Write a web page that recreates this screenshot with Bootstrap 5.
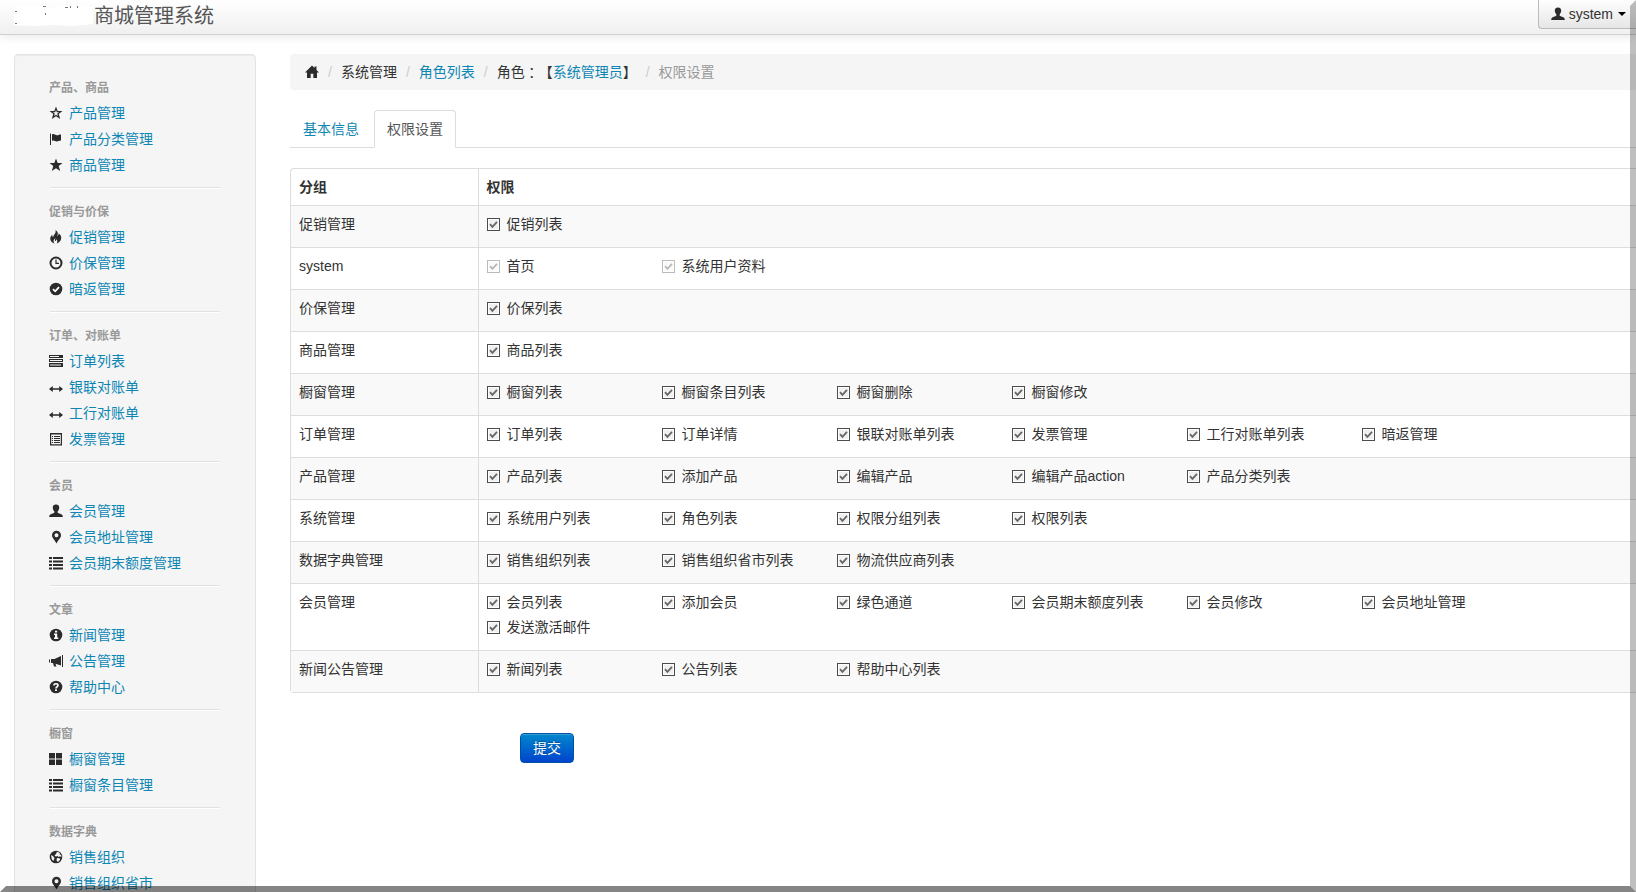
<!DOCTYPE html>
<html lang="zh-CN">
<head>
<meta charset="utf-8">
<meta name="viewport" content="width=device-width, initial-scale=1">
<title>商城管理系统</title>
<link href="https://cdn.jsdelivr.net/npm/bootstrap@5.3.0/dist/css/bootstrap.min.css" rel="stylesheet">
<style>
body{font:14px/20px "Liberation Sans","Noto Sans CJK SC",sans-serif;color:#333;background:#fff}
a{color:#0d86b4;text-decoration:none}
a:hover{color:#005580;text-decoration:underline}
.ico{width:14px;height:14px;fill:#2b2b2b;flex:none}
.topbar{height:35px;background:linear-gradient(#fff,#f0f0f0);border-bottom:1px solid #d0d0d0;box-shadow:0 1px 10px rgba(0,0,0,.1);position:relative}
.brand{padding-left:14px;font-size:20px;line-height:32px;color:#777}
.brand:hover{color:#555;text-decoration:none}
.logo{width:80px;height:22px}
.user-btn{height:30px;margin-top:-1px;padding:0 10px 0 12px;border:1px solid #bbb;border-top:0;border-right:0;border-radius:0 0 0 4px;background:linear-gradient(#fff,#e6e6e6);color:#333;font-size:14px;line-height:20px;gap:4px}
.user-btn::after{margin-left:1px;color:#000;border-top-width:4px;border-left-width:4px;border-right-width:4px}
.page{padding:19px 0 0 14px;gap:34px}
.side{width:242px;padding:19px 34px;background:#f5f5f5;border:1px solid #e3e3e3;border-radius:4px;box-shadow:inset 0 1px 1px rgba(0,0,0,.05);flex:none}
.side h2{font-size:12px;line-height:20px;padding:4px 0 2px;margin:0;font-weight:700;color:#999}
.side li{display:flex;align-items:center;gap:6px;height:26px}
.side hr{margin:9px 1px;border:0;height:2px;opacity:1;background:linear-gradient(#e1e1e1 50%,#fff 50%)}
.crumbs{padding:8px 15px;background:#f5f5f5;border-radius:4px 0 0 4px;margin-bottom:20px}
.crumbs .breadcrumb-item{display:flex;align-items:center;padding-left:0}
.crumbs .breadcrumb-item+.breadcrumb-item::before{padding:0 9px;color:#ccc;content:"/";float:none}
.crumbs .active{color:#999}
.wide-colon{font-family:"Noto Sans CJK TC",sans-serif}
.nav-tabs{--bs-nav-tabs-border-color:#ddd;margin-bottom:20px;gap:2px}
.nav-tabs .nav-link{padding:8px 12px;color:#0d86b4;border-radius:4px 4px 0 0}
.nav-tabs .nav-link.active{color:#555;border-color:#ddd #ddd #fff}
.grid-table{border:1px solid #ddd;border-right:0;border-radius:4px 0 0 4px;margin-bottom:40px}
.grid-table table{margin:0;color:#333;--bs-table-striped-bg:#f9f9f9;--bs-table-striped-color:#333}
.grid-table th,.grid-table td{padding:8px;border:0;vertical-align:top}
.grid-table tbody tr{border-top:1px solid #ddd}
.grid-table th:first-child,.grid-table td:first-child{width:187px;border-right:1px solid #ddd}
.perm{display:flex;align-items:center;gap:7px;width:175px;height:20px;margin-bottom:5px}
.perm input{appearance:none;width:13px;height:13px;margin:0;border:1px solid #4c4c4c;background:#f2f2f2;box-shadow:inset 0 0 0 1px #fff}
.perm input:checked{background:#f0f0f0 url("data:image/svg+xml,%3Csvg xmlns='http://www.w3.org/2000/svg' viewBox='0 0 11 11'%3E%3Cpath d='M2 5.2 4.4 7.8 9 2.8' fill='none' stroke='%23666' stroke-width='1.8'/%3E%3C/svg%3E") center/11px}
.perm input:disabled{border-color:#bbb;background-color:#fafafa;background-image:url("data:image/svg+xml,%3Csvg xmlns='http://www.w3.org/2000/svg' viewBox='0 0 11 11'%3E%3Cpath d='M2 5.2 4.4 7.8 9 2.8' fill='none' stroke='%23b5b5b5' stroke-width='1.7'/%3E%3C/svg%3E")}
.submit-row{padding-left:230px}
.submit-btn{padding:4px 12px;font-size:14px;line-height:20px;color:#fff;border:1px solid #0050a8;border-radius:4px;background:linear-gradient(#08c,#04c);text-shadow:0 -1px 0 rgba(0,0,0,.25);box-shadow:inset 0 1px 0 rgba(255,255,255,.2)}
.submit-btn:hover{color:#fff;background:#04c}
.bevel{position:fixed;inset:0;border:6px solid transparent;border-right-color:rgba(0,0,0,.25);border-bottom-color:rgba(0,0,0,.48);pointer-events:none;z-index:10}
</style>
</head>
<body>
<svg class="d-none" xmlns="http://www.w3.org/2000/svg">
<symbol id="i-star-o" viewBox="0 0 14 14"><path fill-rule="evenodd" d="M7 .5 8.700 5H13.500L9.700 8l1.500 5L7 10.200 2.800 13l1.500-5L.5 5h4.800zM7 4 6.200 6.300H4L5.800 7.800 5.200 10 7 8.800 8.800 10 8.200 7.800 10 6.300H7.800z"/></symbol>
<symbol id="i-star" viewBox="0 0 14 14"><path d="M7 .5 8.700 5H13.500L9.700 8l1.500 5L7 10.200 2.800 13l1.500-5L.5 5h4.800z"/></symbol>
<symbol id="i-flag" viewBox="0 0 14 14"><path d="M1 1.500h1v11.500H1zM3 2.500c2-1.200 3 .8 5 .8 1.200 0 2-.8 4-.8v6c-2 0-2.800.9-4.300.9C6 9.400 5 7.700 3 8.900z"/></symbol>
<symbol id="i-fire" viewBox="0 0 14 14"><path d="M6.500 0C9.500 2 9 4 8.300 6c.9-.5 1.400-1.500 1.300-2.800C12 5 12.700 7 12 9.300c-.5 2-2 3.500-4.300 4.200.9-1.600.7-2.800-.2-4.200-.3 1-.7 1.500-1.300 2-.5-.8-.4-2 .3-3.300C4.300 9.300 4 11.500 5.500 13.500 3 13 1.200 11 1.200 8.800 1.200 7 2.300 5.800 3.200 4.800 3.200 6 3.500 6.700 4.200 7 4.500 4.500 7.500 3.500 6.500 0z"/></symbol>
<symbol id="i-time" viewBox="0 0 14 14"><circle cx="7" cy="7" r="5.500" fill="none" stroke="#2b2b2b" stroke-width="2"/><path d="M6.400 3.500h1.200v3.200H10v1.200H6.400z"/></symbol>
<symbol id="i-ok" viewBox="0 0 14 14"><circle cx="7" cy="7" r="6.300"/><path d="M4 7.200 6.200 9.300 10 5.200" fill="none" stroke="#fff" stroke-width="1.800"/></symbol>
<symbol id="i-rows" viewBox="0 0 14 14"><path fill-rule="evenodd" d="M0 1h14v3H0zM0 5h14v3H0zM0 9h14v4H0zM1 2v1h9V2zM1 6v1h12V6zM1 10.500v1h11v-1z"/></symbol>
<symbol id="i-arrows" viewBox="0 0 14 14"><path d="M0 9 3.800 6v2.200h6.400V6L14 9l-3.800 3V9.800H3.800V12z"/></symbol>
<symbol id="i-listalt" viewBox="0 0 14 14"><path fill-rule="evenodd" d="M1 1h12v12.500H1zM2.200 2.500v9.800h9.600V2.500z"/><path d="M3 4h1v1H3zM5 4h6v1H5zM3 6h1v1H3zM5 6h6v1H5zM3 8h1v1H3zM5 8h6v1H5zM3 10h1v1H3zM5 10h6v1H5z"/></symbol>
<symbol id="i-user" viewBox="0 0 14 14"><path d="M7 .5c2.300 0 3.300 1.300 3.200 3.300-.1 1.500-.7 2.800-1.500 3.500v1.500c1 .9 3.600 1.200 4.600 2.300.4.500.5 1.300.5 2H.2c0-.7.1-1.500.5-2 1-1.100 3.600-1.400 4.600-2.300V7.300C4.500 6.600 3.900 5.300 3.800 3.800 3.700 1.800 4.700.5 7 .5z"/></symbol>
<symbol id="i-pin" viewBox="0 0 14 14"><path fill-rule="evenodd" d="M7.500.8A4.500 4.500 0 0 1 12 5.300C12 8 9.300 9.800 7.500 13.500 5.700 9.800 3 8 3 5.300A4.500 4.500 0 0 1 7.500.8zm0 2.500a2 2 0 1 0 0 4 2 2 0 0 0 0-4z"/></symbol>
<symbol id="i-list" viewBox="0 0 14 14"><path d="M0 1h3v2H0zM4 1h10v2H4zM0 4.500h3v2H0zM4 4.500h10v2H4zM0 8h3v2H0zM4 8h10v2H4zM0 11.500h3v2H0zM4 11.500h10v2H4z"/></symbol>
<symbol id="i-info" viewBox="0 0 14 14"><circle cx="7" cy="7" r="6.300"/><path fill="#fff" d="M6 2.800h2.200v1.700H6zM5 5.500h3.200v4H9.300V11H5V9.500h1V7H5z"/></symbol>
<symbol id="i-horn" viewBox="0 0 14 14"><path d="M13 1h1v12h-1zM12 2v9.500L6.500 9.700l.9 2.800H5L4 9H2V5h3.500zM0 5.500h1v3H0z"/></symbol>
<symbol id="i-help" viewBox="0 0 14 14"><circle cx="7" cy="7" r="6.300"/><path d="M4.900 5.500C5 3.200 9 3.300 9 5.400 9 6.800 7 6.700 7 8.400" fill="none" stroke="#fff" stroke-width="1.600"/><path fill="#fff" d="M6.100 9.300h1.800V11H6.100z"/></symbol>
<symbol id="i-tiles" viewBox="0 0 14 14"><path d="M0 1h6v5.500H0zM7 1h6v5.500H7zM0 7.500h6V13H0zM7 7.500h6V13H7z"/></symbol>
<symbol id="i-globe" viewBox="0 0 14 14"><circle cx="7" cy="7" r="6.300"/><path fill="#f5f5f5" d="M8 1.800 11 3l-.5 1.200 1.700.8.3 2-1.700-.8-1 .8L8.300 6l-1.500.6L5.500 5.400 7 4zM2 5l2.200 1.300 1.300 2L4.300 11 2.800 9.300zM8 8l2.700.3.400 1.500L9 12l-1.500-1.500z"/></symbol>
<symbol id="i-home" viewBox="0 0 14 14"><path d="M7 .5 9.500 3V1.500h2V5L14 7.500h-2V13H8.300V8.800H5.700V13H2V7.500H0z"/></symbol>
</svg>

<div class="vh-100 overflow-hidden">
<header class="topbar d-flex justify-content-between align-items-start">
  <a class="brand d-flex" href="#">
    <svg class="logo mt-1" viewBox="0 0 80 22" aria-hidden="true"><path fill="#fff" d="M0 2h24l6 3 18-3 31 1v17l-20 2-18-1-20 1-21-1z"/><path fill="#777" d="M1 7h2v1H1zM1 19h2v1H1zM29 2h3v1h-3zM31 9h1v2h-1zM51 3h3v1h-3zM56 2h1v2h-1zM63 2h1v2h-1z"/></svg>
    <span>商城管理系统</span>
  </a>
  <button class="user-btn dropdown-toggle d-flex align-items-center" type="button" data-bs-toggle="dropdown"><svg class="ico"><use href="#i-user"/></svg>system</button>
</header>

<div class="page d-flex align-items-start">
  <nav class="side">
    <h2>产品、商品</h2>
    <ul class="list-unstyled m-0">
      <li><svg class="ico"><use href="#i-star-o"/></svg><a href="#">产品管理</a></li>
      <li><svg class="ico"><use href="#i-flag"/></svg><a href="#">产品分类管理</a></li>
      <li><svg class="ico"><use href="#i-star"/></svg><a href="#">商品管理</a></li>
    </ul>
    <hr>
    <h2>促销与价保</h2>
    <ul class="list-unstyled m-0">
      <li><svg class="ico"><use href="#i-fire"/></svg><a href="#">促销管理</a></li>
      <li><svg class="ico"><use href="#i-time"/></svg><a href="#">价保管理</a></li>
      <li><svg class="ico"><use href="#i-ok"/></svg><a href="#">暗返管理</a></li>
    </ul>
    <hr>
    <h2>订单、对账单</h2>
    <ul class="list-unstyled m-0">
      <li><svg class="ico"><use href="#i-rows"/></svg><a href="#">订单列表</a></li>
      <li><svg class="ico"><use href="#i-arrows"/></svg><a href="#">银联对账单</a></li>
      <li><svg class="ico"><use href="#i-arrows"/></svg><a href="#">工行对账单</a></li>
      <li><svg class="ico"><use href="#i-listalt"/></svg><a href="#">发票管理</a></li>
    </ul>
    <hr>
    <h2>会员</h2>
    <ul class="list-unstyled m-0">
      <li><svg class="ico"><use href="#i-user"/></svg><a href="#">会员管理</a></li>
      <li><svg class="ico"><use href="#i-pin"/></svg><a href="#">会员地址管理</a></li>
      <li><svg class="ico"><use href="#i-list"/></svg><a href="#">会员期末额度管理</a></li>
    </ul>
    <hr>
    <h2>文章</h2>
    <ul class="list-unstyled m-0">
      <li><svg class="ico"><use href="#i-info"/></svg><a href="#">新闻管理</a></li>
      <li><svg class="ico"><use href="#i-horn"/></svg><a href="#">公告管理</a></li>
      <li><svg class="ico"><use href="#i-help"/></svg><a href="#">帮助中心</a></li>
    </ul>
    <hr>
    <h2>橱窗</h2>
    <ul class="list-unstyled m-0">
      <li><svg class="ico"><use href="#i-tiles"/></svg><a href="#">橱窗管理</a></li>
      <li><svg class="ico"><use href="#i-list"/></svg><a href="#">橱窗条目管理</a></li>
    </ul>
    <hr>
    <h2>数据字典</h2>
    <ul class="list-unstyled m-0">
      <li><svg class="ico"><use href="#i-globe"/></svg><a href="#">销售组织</a></li>
      <li><svg class="ico"><use href="#i-pin"/></svg><a href="#">销售组织省市</a></li>
    </ul>
  </nav>

  <main class="flex-grow-1">
    <ol class="breadcrumb crumbs">
      <li class="breadcrumb-item"><a class="d-flex" href="#" aria-label="首页"><svg class="ico"><use href="#i-home"/></svg></a></li>
      <li class="breadcrumb-item">系统管理</li>
      <li class="breadcrumb-item"><a href="#">角色列表</a></li>
      <li class="breadcrumb-item">角色<span class="wide-colon">：</span>【<a href="#">系统管理员</a>】</li>
      <li class="breadcrumb-item active">权限设置</li>
    </ol>

    <ul class="nav nav-tabs">
      <li class="nav-item"><a class="nav-link" href="#">基本信息</a></li>
      <li class="nav-item"><a class="nav-link active" href="#">权限设置</a></li>
    </ul>

    <form>
      <div class="grid-table">
      <table class="table table-striped">
        <thead><tr><th>分组</th><th>权限</th></tr></thead>
        <tbody>
          <tr><td>促销管理</td><td><div class="d-flex flex-wrap">
            <label class="perm"><input type="checkbox" checked>促销列表</label>
          </div></td></tr>
          <tr><td>system</td><td><div class="d-flex flex-wrap">
            <label class="perm"><input type="checkbox" checked disabled>首页</label>
            <label class="perm"><input type="checkbox" checked disabled>系统用户资料</label>
          </div></td></tr>
          <tr><td>价保管理</td><td><div class="d-flex flex-wrap">
            <label class="perm"><input type="checkbox" checked>价保列表</label>
          </div></td></tr>
          <tr><td>商品管理</td><td><div class="d-flex flex-wrap">
            <label class="perm"><input type="checkbox" checked>商品列表</label>
          </div></td></tr>
          <tr><td>橱窗管理</td><td><div class="d-flex flex-wrap">
            <label class="perm"><input type="checkbox" checked>橱窗列表</label>
            <label class="perm"><input type="checkbox" checked>橱窗条目列表</label>
            <label class="perm"><input type="checkbox" checked>橱窗删除</label>
            <label class="perm"><input type="checkbox" checked>橱窗修改</label>
          </div></td></tr>
          <tr><td>订单管理</td><td><div class="d-flex flex-wrap">
            <label class="perm"><input type="checkbox" checked>订单列表</label>
            <label class="perm"><input type="checkbox" checked>订单详情</label>
            <label class="perm"><input type="checkbox" checked>银联对账单列表</label>
            <label class="perm"><input type="checkbox" checked>发票管理</label>
            <label class="perm"><input type="checkbox" checked>工行对账单列表</label>
            <label class="perm"><input type="checkbox" checked>暗返管理</label>
          </div></td></tr>
          <tr><td>产品管理</td><td><div class="d-flex flex-wrap">
            <label class="perm"><input type="checkbox" checked>产品列表</label>
            <label class="perm"><input type="checkbox" checked>添加产品</label>
            <label class="perm"><input type="checkbox" checked>编辑产品</label>
            <label class="perm"><input type="checkbox" checked>编辑产品action</label>
            <label class="perm"><input type="checkbox" checked>产品分类列表</label>
          </div></td></tr>
          <tr><td>系统管理</td><td><div class="d-flex flex-wrap">
            <label class="perm"><input type="checkbox" checked>系统用户列表</label>
            <label class="perm"><input type="checkbox" checked>角色列表</label>
            <label class="perm"><input type="checkbox" checked>权限分组列表</label>
            <label class="perm"><input type="checkbox" checked>权限列表</label>
          </div></td></tr>
          <tr><td>数据字典管理</td><td><div class="d-flex flex-wrap">
            <label class="perm"><input type="checkbox" checked>销售组织列表</label>
            <label class="perm"><input type="checkbox" checked>销售组织省市列表</label>
            <label class="perm"><input type="checkbox" checked>物流供应商列表</label>
          </div></td></tr>
          <tr><td>会员管理</td><td><div class="d-flex flex-wrap">
            <label class="perm"><input type="checkbox" checked>会员列表</label>
            <label class="perm"><input type="checkbox" checked>添加会员</label>
            <label class="perm"><input type="checkbox" checked>绿色通道</label>
            <label class="perm"><input type="checkbox" checked>会员期末额度列表</label>
            <label class="perm"><input type="checkbox" checked>会员修改</label>
            <label class="perm"><input type="checkbox" checked>会员地址管理</label>
            <label class="perm"><input type="checkbox" checked>发送激活邮件</label>
          </div></td></tr>
          <tr><td>新闻公告管理</td><td><div class="d-flex flex-wrap">
            <label class="perm"><input type="checkbox" checked>新闻列表</label>
            <label class="perm"><input type="checkbox" checked>公告列表</label>
            <label class="perm"><input type="checkbox" checked>帮助中心列表</label>
          </div></td></tr>
        </tbody>
      </table>
      </div>
      <div class="submit-row"><button class="btn submit-btn" type="submit">提交</button></div>
    </form>
  </main>
</div>
</div>
<div class="bevel"></div>
<script src="https://cdn.jsdelivr.net/npm/bootstrap@5.3.0/dist/js/bootstrap.bundle.min.js"></script>
</body>
</html>
